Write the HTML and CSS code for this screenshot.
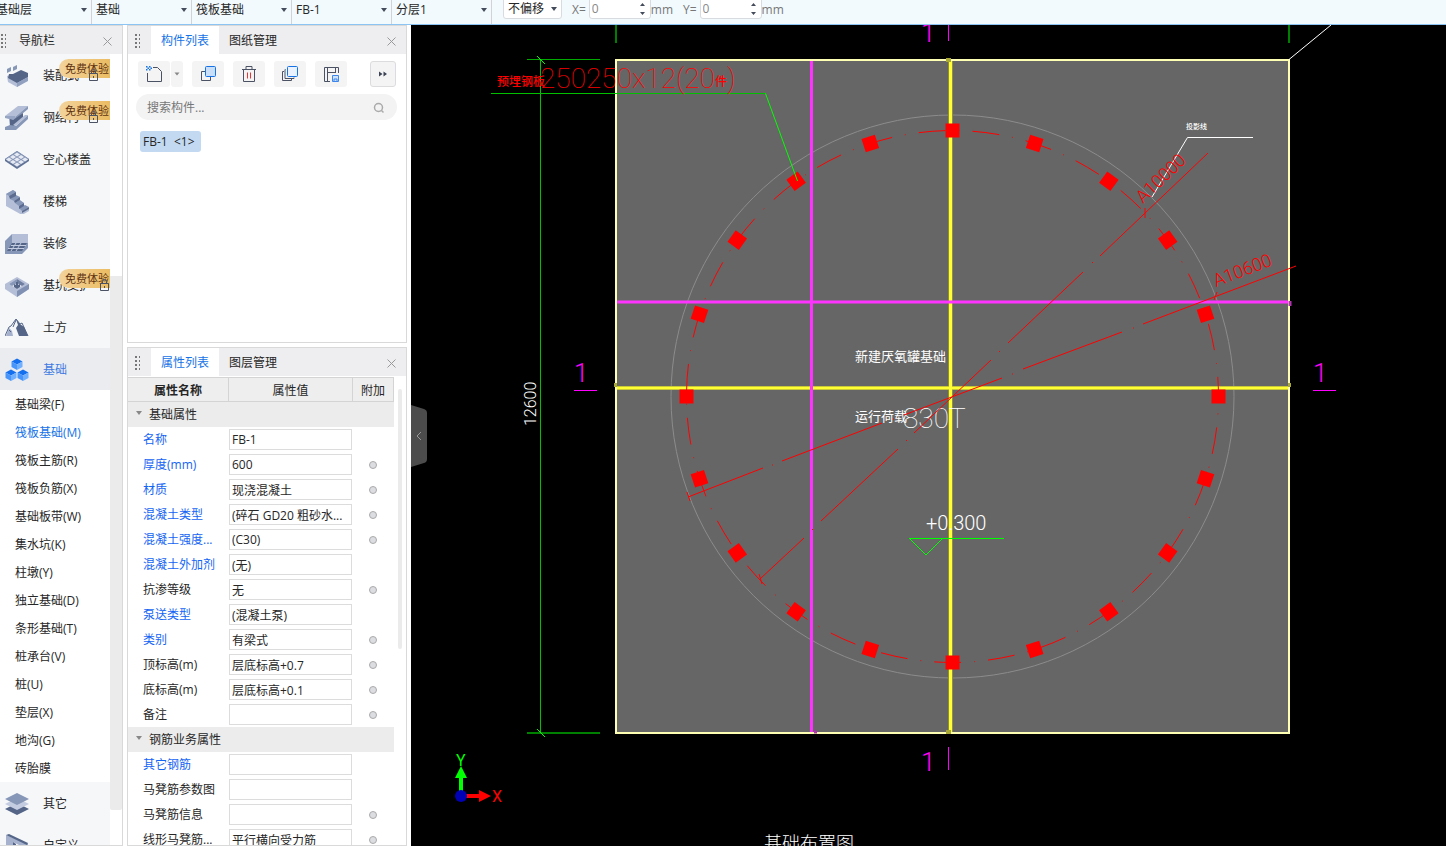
FILE: index.html
```
<!DOCTYPE html>
<html lang="zh-CN">
<head>
    <meta charset="UTF-8">
    <meta name="viewport" content="width=device-width, initial-scale=1.0">
    <title>筏板基础</title>
    <link rel="stylesheet" href="styles.css">
</head>
<body>

    <!-- Top bar -->
    <header class="topbar">
        <select class="combo" aria-label="楼层"><option>基础层</option></select>
        <select class="combo" aria-label="构件大类"><option>基础</option></select>
        <select class="combo" aria-label="构件类型"><option>筏板基础</option></select>
        <select class="combo" aria-label="构件"><option>FB-1</option></select>
        <select class="combo" aria-label="分层"><option>分层1</option></select>
        <select class="offset" aria-label="偏移方式"><option>不偏移</option></select>
        <label class="coord" for="dx">X=</label>
        <div class="spin">
            <input id="dx" type="text" value="0">
            <svg width="9" height="16" viewBox="0 0 9 16"><path d="M2 5L4.500 2L7 5ZM2 11L4.500 14L7 11Z" fill="#444b5a"/></svg>
        </div>
        <span class="unit">mm</span>
        <label class="coord" for="dy">Y=</label>
        <div class="spin">
            <input id="dy" type="text" value="0">
            <svg width="9" height="16" viewBox="0 0 9 16"><path d="M2 5L4.500 2L7 5ZM2 11L4.500 14L7 11Z" fill="#444b5a"/></svg>
        </div>
        <span class="unit">mm</span>
    </header>

    <main class="workspace">

        <!-- Navigation -->
        <nav class="nav">
            <div class="panel-head nav-head">
                <span class="grip"></span>
                <span class="nav-title">导航栏</span>
                <button class="close" aria-label="关闭"><svg width="9" height="9" viewBox="0 0 9 9"><path d="M.5.5l8 8M8.500.5l-8 8"/></svg></button>
            </div>
            <div class="nav-body">
                <div class="nav-list">
                    <a class="nav-item" href="#">
                        <svg class="nav-icon" viewBox="0 0 24 24"><path d="M2 5l4-2v4l-4 2zM8 3l4-2v4l-4 2z" fill="#8797b8"/><path d="M2 12l3-1 7 5 11-6v6l-11 7-9-5z" fill="#b4bed6"/><path d="M4 10l4 0 8-4 7 3v4l-11 6-9-5z" fill="#546588"/><path d="M12 19l11-6v4l-11 6z" fill="#93a1c1"/></svg>
                        <span>装配式</span><i class="badge">免费体验</i><svg class="lock" viewBox="0 0 9 12"><path d="M2.500 4V2.500a2 2 0 014 0V4M.5 4.500h8v7h-8zM4.500 7v2" /></svg>
                    </a>
                    <a class="nav-item" href="#">
                        <svg class="nav-icon" viewBox="0 0 24 24"><path d="M0 10L13 0h10L10 11z" fill="#b4bed6"/><path d="M10 11L23 0v3L11 13z" fill="#8797b8"/><path d="M0 10h10l1 3-3 1v6l-3 1-1-8-4-1z" fill="#97a5c5"/><path d="M5 13l3 1L18 7v5L8 21l-3-1z" fill="#546588"/><path d="M0 21l5-2 6 1L23 9v4L11 24H0z" fill="#8797b8"/><path d="M8 19L20 9h3L11 20z" fill="#b4bed6"/></svg>
                        <span>钢结构</span><i class="badge">免费体验</i><svg class="lock" viewBox="0 0 9 12"><path d="M2.500 4V2.500a2 2 0 014 0V4M.5 4.500h8v7h-8zM4.500 7v2" /></svg>
                    </a>
                    <a class="nav-item" href="#">
                        <svg class="nav-icon" viewBox="0 0 24 24"><path d="M0 11l12-8 12 8v2l-12 8-12-8z" fill="#5f7195"/><path d="M0 11l12-8 12 8-12 8z" fill="#8797b8"/><g fill="#e6eaf2"><path d="M12 4.500l3 2-3 2-3-2zM8 7l3 2-3 2-3-2zM16 7l3 2-3 2-3-2zM4 9.500l3 2-3 2-3-2zM12 9.500l3 2-3 2-3-2zM20 9.500l3 2-3 2-3-2zM8 12l3 2-3 2-3-2zM16 12l3 2-3 2-3-2zM12 14.500l3 2-3 2-3-2z"/></g></svg>
                        <span>空心楼盖</span>
                    </a>
                    <a class="nav-item" href="#">
                        <svg class="nav-icon" viewBox="0 0 24 24"><path d="M1 4l7-4 3 2v4l4 2v3l4 2v3l5 2v3l-7 4L1 16z" fill="#b4bed6"/><path d="M1 4l7-4 3 2-7 4zM5 9l6-4 4 2-6 4zM10 13l5-3 4 3-5 3zM14 18l6-3 4 2-7 4z" fill="#8797b8"/><path d="M4 6l7-4v4l-6 3zM9 11l6-4v3l-5 3zM14 16l5-3v3l-5 3zM17 21l7-4v2l-7 4z" fill="#5b6c90"/></svg>
                        <span>楼梯</span>
                    </a>
                    <a class="nav-item" href="#">
                        <svg class="nav-icon" viewBox="0 0 24 24"><path d="M0 9l7-7h16v14l-6 6H0z" fill="#8797b8"/><path d="M7 2h16v9H7z" fill="#b4bed6"/><path d="M7 11h15l-5 8H2z" fill="#546588"/><path d="M6 13.500h15M3 16.500h16M11 11l-5 8M16 11l-5 8" stroke="#c3cce0" stroke-width="1"/></svg>
                        <span>装修</span>
                    </a>
                    <a class="nav-item" href="#">
                        <svg class="nav-icon" viewBox="0 0 24 24"><path d="M0 10l12-7 12 7v5l-12 8-12-8z" fill="#b4bed6"/><path d="M12 17l12-7v5l-12 8z" fill="#7f90b3"/><path d="M4 10l8-5 8 5-8 5z" fill="#dfe4ee"/><path d="M4 10l8-5v4l-5 3z" fill="#8797b8"/><path d="M20 10l-8-5v4l5 3z" fill="#6d7d9f"/><path d="M9 10v3l3 2 3-2v-3l-2 1V8h-2v3z" fill="#546588"/></svg>
                        <span>基坑支护</span><i class="badge">免费体验</i><svg class="lock lock-far" viewBox="0 0 9 12"><path d="M2.500 4V2.500a2 2 0 014 0V4M.5 4.500h8v7h-8zM4.500 7v2" /></svg>
                    </a>
                    <a class="nav-item" href="#">
                        <svg class="nav-icon" viewBox="0 0 24 24"><path d="M11 3l2 6-2 3 3 8h9l-4-9-4-3z" fill="#546588"/><path d="M1 20l3-8 3 3 1 5z" fill="#a6b2cd"/><path d="M0 20l4-9 2-1 5-7 4 5 2-1 6 13M4 14l2 2M11 4l-3 7" fill="none" stroke="#546588" stroke-width="1"/></svg>
                        <span>土方</span>
                    </a>
                    <a class="nav-item active" href="#">
                        <svg class="nav-icon" viewBox="0 0 24 24"><g id="cube"><path d="M6.500 3.500l5.500-3 5.500 3-5.500 3z" fill="#1570f0"/><path d="M6.500 3.500l5.500 3v5.500l-5.500-3z" fill="#4795fb"/><path d="M17.500 3.500l-5.500 3v5.500l5.500-3z" fill="#70b0ff"/></g><use href="#cube" x="-6" y="11"/><use href="#cube" x="6" y="11"/></svg>
                        <span>基础</span>
                    </a>
                    <ul class="subnav">
                        <li><a href="#">基础梁(F)</a></li>
                        <li><a class="current" href="#">筏板基础(M)</a></li>
                        <li><a href="#">筏板主筋(R)</a></li>
                        <li><a href="#">筏板负筋(X)</a></li>
                        <li><a href="#">基础板带(W)</a></li>
                        <li><a href="#">集水坑(K)</a></li>
                        <li><a href="#">柱墩(Y)</a></li>
                        <li><a href="#">独立基础(D)</a></li>
                        <li><a href="#">条形基础(T)</a></li>
                        <li><a href="#">桩承台(V)</a></li>
                        <li><a href="#">桩(U)</a></li>
                        <li><a href="#">垫层(X)</a></li>
                        <li><a href="#">地沟(G)</a></li>
                        <li><a href="#">砖胎膜</a></li>
                    </ul>
                    <a class="nav-item" href="#">
                        <svg class="nav-icon" viewBox="0 0 24 24"><path d="M0 17l12-6 12 6-12 6z" fill="#546588"/><path d="M0 12l12-6 12 6-12 6z" fill="#c3cce0"/><path d="M0 7l12-6 12 6-12 6z" fill="#8797b8"/></svg>
                        <span>其它</span>
                    </a>
                    <a class="nav-item" href="#">
                        <svg class="nav-icon" viewBox="0 0 24 24"><path d="M1 1l22 9v6L8 23H1z" fill="#a6b2cd"/><path d="M1 1l3-1 19 9-1 2z" fill="#546588"/><path d="M8 8l10 5-10 5z" fill="#f5f7f9"/><path d="M8 8v12l3-2v-8z" fill="#546588"/></svg>
                        <span>自定义</span>
                    </a>
                </div>
                <div class="nav-scroll"></div>
            </div>
        </nav>

        <div class="panels">

            <!-- Component list -->
            <section class="panel">
                <div class="panel-head">
                    <span class="grip"></span>
                    <button class="tab active">构件列表</button>
                    <button class="tab">图纸管理</button>
                    <button class="close" aria-label="关闭"><svg width="9" height="9" viewBox="0 0 9 9"><path d="M.5.5l8 8M8.500.5l-8 8"/></svg></button>
                </div>
                <div class="tools">
                    <div class="split">
                        <button class="tool" aria-label="新建"><svg width="18" height="18" viewBox="0 0 18 18"><path d="M8 2.500h4.500l4 4v10h-14V8" /><path d="M1 1h1.500v1.500H1zM4 1h1.500v1.500H4zM2.500 2.500H4V4H2.500zM5.500 2.500H7V4H5.500zM1 4h1.500v1.500H1zM4 4h1.500v1.500H4z" fill="#1673e6" stroke="none"/></svg></button>
                        <button class="tool arrow" aria-label="更多新建"><svg width="6" height="4" viewBox="0 0 6 4"><path d="M.5.5h5L3 3.500z" fill="#888" stroke="none"/></svg></button>
                    </div>
                    <button class="tool" aria-label="复制"><svg width="18" height="18" viewBox="0 0 18 18"><path d="M6 6.500H2.500v9h9V12"/><rect x="6.500" y="1.500" width="10" height="10" rx="1" fill="#c9def8" stroke="#1673e6"/></svg></button>
                    <button class="tool" aria-label="删除"><svg width="18" height="18" viewBox="0 0 18 18"><path d="M2 4.500h14M6 4V1.500h6V4M3.500 5v11.500h11V5"/><path d="M7.500 7.500v6M10.500 7.500v6" stroke="#e33"/></svg></button>
                    <button class="tool" aria-label="层间复制"><svg width="18" height="18" viewBox="0 0 18 18"><path d="M3 6.500H1.500v9h9V14M4.500 4.500H4v9h9v-1"/><rect x="6.500" y="1.500" width="10" height="10" rx="1" fill="#e9f2fe" stroke="#1673e6"/></svg></button>
                    <button class="tool" aria-label="存档"><svg width="18" height="18" viewBox="0 0 18 18"><path d="M8 16.500H2.500v-14h14V8M5.500 3v13M13.500 3v5M5.500 7.500h8"/><path d="M10.500 10.500h6v6h-6zM12 16v-2h3v2" stroke="#3d86ec" fill="#cfe2fb"/></svg></button>
                    <button class="tool more" aria-label="更多"><svg width="8" height="6" viewBox="0 0 8 6"><path d="M0 .5v5L3.500 3zM4.500.5v5L8 3z" fill="#3c4354" stroke="none"/></svg></button>
                </div>
                <div class="search">
                    <input type="text" placeholder="搜索构件..." aria-label="搜索构件">
                    <svg width="12" height="12" viewBox="0 0 12 12"><circle cx="5.500" cy="5.500" r="4" fill="none" stroke="#aaa" stroke-width="1.500"/><path d="M8.500 8.500l2 2" stroke="#aaa" stroke-width="1.500"/></svg>
                </div>
                <button class="component">FB-1&nbsp; &lt;1&gt;</button>
            </section>

            <!-- Property list -->
            <section class="panel props">
                <div class="panel-head">
                    <span class="grip"></span>
                    <button class="tab active">属性列表</button>
                    <button class="tab">图层管理</button>
                    <button class="close" aria-label="关闭"><svg width="9" height="9" viewBox="0 0 9 9"><path d="M.5.5l8 8M8.500.5l-8 8"/></svg></button>
                </div>
                <div class="props-body">
                    <table>
                        <thead>
                            <tr><th class="strong">属性名称</th><th>属性值</th><th>附加</th></tr>
                        </thead>
                        <tbody>
                            <tr class="group"><td colspan="3">基础属性</td></tr>
                            <tr><td class="key"><label for="p1">名称</label></td><td><input id="p1" value="FB-1"></td><td></td></tr>
                            <tr><td class="key"><label for="p2">厚度(mm)</label></td><td><input id="p2" value="600"></td><td><i class="dot"></i></td></tr>
                            <tr><td class="key"><label for="p3">材质</label></td><td><input id="p3" value="现浇混凝土"></td><td><i class="dot"></i></td></tr>
                            <tr><td class="key"><label for="p4">混凝土类型</label></td><td><input id="p4" value="(碎石 GD20 粗砂水..."></td><td><i class="dot"></i></td></tr>
                            <tr><td class="key"><label for="p5">混凝土强度...</label></td><td><input id="p5" value="(C30)"></td><td><i class="dot"></i></td></tr>
                            <tr><td class="key"><label for="p6">混凝土外加剂</label></td><td><input id="p6" value="(无)"></td><td></td></tr>
                            <tr><td><label for="p7">抗渗等级</label></td><td><input id="p7" value="无"></td><td><i class="dot"></i></td></tr>
                            <tr><td class="key"><label for="p8">泵送类型</label></td><td><input id="p8" value="(混凝土泵)"></td><td></td></tr>
                            <tr><td class="key"><label for="p9">类别</label></td><td><input id="p9" value="有梁式"></td><td><i class="dot"></i></td></tr>
                            <tr><td><label for="p10">顶标高(m)</label></td><td><input id="p10" value="层底标高+0.7"></td><td><i class="dot"></i></td></tr>
                            <tr><td><label for="p11">底标高(m)</label></td><td><input id="p11" value="层底标高+0.1"></td><td><i class="dot"></i></td></tr>
                            <tr><td><label for="p12">备注</label></td><td><input id="p12" value=""></td><td><i class="dot"></i></td></tr>
                            <tr class="group"><td colspan="3">钢筋业务属性</td></tr>
                            <tr><td class="key"><label for="p13">其它钢筋</label></td><td><input id="p13" value=""></td><td></td></tr>
                            <tr><td><label for="p14">马凳筋参数图</label></td><td><input id="p14" value=""></td><td></td></tr>
                            <tr><td><label for="p15">马凳筋信息</label></td><td><input id="p15" value=""></td><td><i class="dot"></i></td></tr>
                            <tr><td><label for="p16">线形马凳筋...</label></td><td><input id="p16" value="平行横向受力筋"></td><td><i class="dot"></i></td></tr>
                        </tbody>
                    </table>
                    <div class="props-scroll"></div>
                </div>
            </section>
        </div>

        <!-- Drawing area -->
        <section class="canvas">
            <svg class="drawing">
                <defs>
                    <rect id="plate" x="-7" y="-273" width="14" height="14" fill="#f00"/>
                </defs>
                <g transform="translate(-411 -25)" fill="none">
                    <!-- raft slab -->
                    <rect x="616" y="60" width="673" height="673" fill="#666"/>
                    <circle cx="952.500" cy="396.500" r="281.500" stroke="#8c8c8c"/>

                    <!-- axes -->
                    <g stroke-width="3">
                        <path d="M615 388H1290" stroke="#8f8f3f" stroke-width="4"/>
                        <path d="M950.500 59V733" stroke="#8f8f3f" stroke-width="5"/>
                        <path d="M615 388H1290M950.500 59V733" stroke="#ff3"/>
                        <path d="M615 302H1290M811.500 59V733" stroke="#f3f"/>
                    </g>
                    <rect x="616" y="60" width="673" height="673" stroke="#ffffb4" stroke-width="2"/>
                    <path d="M614 385h3M1288 385h3M946 60h5M946 732h5" stroke="#a9a93a" stroke-width="4"/>
                    <path d="M814 732h3M1290 301v5" stroke="#b033b0" stroke-width="3"/>

                    <!-- bolt circle -->
                    <circle cx="952.500" cy="396.500" r="266" stroke="#f00" stroke-dasharray="27 13 1 13" stroke-dashoffset="23"/>
                    <g transform="translate(952.500 396.500)">
                        <use href="#plate"/>
                        <use href="#plate" transform="rotate(18)"/>
                        <use href="#plate" transform="rotate(36)"/>
                        <use href="#plate" transform="rotate(54)"/>
                        <use href="#plate" transform="rotate(72)"/>
                        <use href="#plate" transform="rotate(90)"/>
                        <use href="#plate" transform="rotate(108)"/>
                        <use href="#plate" transform="rotate(126)"/>
                        <use href="#plate" transform="rotate(144)"/>
                        <use href="#plate" transform="rotate(162)"/>
                        <use href="#plate" transform="rotate(180)"/>
                        <use href="#plate" transform="rotate(198)"/>
                        <use href="#plate" transform="rotate(216)"/>
                        <use href="#plate" transform="rotate(234)"/>
                        <use href="#plate" transform="rotate(252)"/>
                        <use href="#plate" transform="rotate(270)"/>
                        <use href="#plate" transform="rotate(288)"/>
                        <use href="#plate" transform="rotate(306)"/>
                        <use href="#plate" transform="rotate(324)"/>
                        <use href="#plate" transform="rotate(342)"/>
                    </g>

                    <!-- green dimension lines -->
                    <path d="M616 25v18M1289 25v18" stroke="#008000" stroke-width="2"/>
                    <path d="M527 59.500h73" stroke="#0a0"/>
                    <path d="M527 733h73" stroke="#008000" stroke-width="2"/>
                    <path d="M540.500 59V733M491 93.500H766" stroke="#00c000"/>
                    <path d="M537 56l8 8M537 729l8 8M765.500 93.500L797.500 181M909 538.500h95M910 539l16 16l16-16" stroke="#0f0"/>

                    <!-- leaders and section marks -->
                    <path d="M1289 59.500L1331 25M1152 197L1187.500 137.500H1253" stroke="#fff"/>
                    <path d="M948.500 25v16M948.500 747v23M574 390.500h23M1313 390.500h23" stroke="#f0f"/>

                    <!-- UCS icon -->
                    <path d="M461 796V778" stroke="#0f0" stroke-width="4"/>
                    <path d="M455 778L461 766L467 778z" fill="#0f0"/>
                    <path d="M461 796h19" stroke="#f00" stroke-width="4"/>
                    <path d="M479 790L491 796L479 802z" fill="#f00"/>
                    <circle cx="461" cy="796" r="6" fill="#0000b4"/>

                    <g class="cad">
                        <text class="red cad-cjk" x="497" y="86">预埋钢板<tspan class="cad-lg" x="540" y="88">250250x12(20</tspan><tspan y="86">件</tspan><tspan class="cad-lg" y="88">)</tspan></text>
                        <text class="red cad-md" transform="translate(1143 204) rotate(-44)">A10000</text>
                        <text class="red cad-md" transform="translate(1216 287) rotate(-21)">A10600</text>
                        <text class="cad-sm" transform="translate(536 426) rotate(-90)">12600</text>
                        <text class="cad-xs" x="1186" y="129">投影线</text>
                        <text class="cad-note" x="855" y="361">新建厌氧罐基础</text>
                        <text class="cad-note" x="855" y="421">运行荷载<tspan class="cad-xl" x="903" y="428">830T</tspan></text>
                        <text class="cad-lv" x="926" y="530">+0.300</text>
                        <text class="cad-title" x="764" y="850">基础布置图</text>
                        <g class="magenta">
                            <text x="921" y="42">1</text>
                            <text x="921" y="771">1</text>
                            <text x="574" y="382">1</text>
                            <text x="1313" y="382">1</text>
                        </g>
                        <text class="axis-y" x="456" y="766">Y</text>
                        <text class="axis-x" x="492" y="802">X</text>
                    </g>

                    <!-- diameter dimensions -->
                    <g stroke="#f00">
                        <path d="M1208 153L1100 256M1092 263l1-1M1083 272L1008 343M999 352l1-1M991 360L914 433M906 441l1-1M898 449L821 521M812 530l1-1M804 538L760 579"/>
                        <path d="M1296 266L1143 324M1133 328h1M1122 332L1023 369M1012 374h1M1002 378L904 415M893 419h1M882 423L782 461M772 465h1M763 468L688 497"/>
                        <path d="M759 574l3 10M1145 208v10M687 492l3 9M1217 292l-3 8"/>
                    </g>
                </g>
            </svg>
            <button class="collapse" aria-label="收起"><svg width="16" height="62" viewBox="0 0 16 62"><path d="M0 0L13 4Q16 5 16 8V54Q16 57 13 58L0 62z" fill="#4c4c4c"/><path d="M10 27l-4 4l4 4" fill="none" stroke="#999"/></svg></button>
        </section>
    </main>

</body>
</html>
```
FILE: styles.css
```
* {
    box-sizing: border-box;
}

body {
    margin: 0;
    height: 100vh;
    display: flex;
    flex-direction: column;
    overflow: hidden;
    background: #fff;
    color: #262626;
    font-family: "Open Sans", "Noto Sans CJK SC", sans-serif;
    font-size: 12px;
    line-height: 16px;
}

button, input, select {
    font: inherit;
    color: inherit;
    border: 0;
    margin: 0;
    padding: 0;
    background: none;
}

a {
    color: inherit;
    text-decoration: none;
}

/* Top bar */
.topbar {
    display: flex;
    align-items: flex-end;
    flex: none;
    height: 25px;
    padding-bottom: 5px;
    margin-left: -8px;
    overflow: hidden;
    background: #f2fafe;
    border-bottom: 1px solid #8cc4f4;
    white-space: nowrap;
}

.combo, .offset {
    appearance: none;
    height: 24px;
    padding: 3px 4px 0;
    background: url("data:image/svg+xml,%3Csvg xmlns='http://www.w3.org/2000/svg' width='6' height='4'%3E%3Cpath d='M0 0h6L3 4z' fill='%23444b5a'/%3E%3C/svg%3E") no-repeat;
}

.combo {
    width: 100px;
    height: 30px;
    margin-bottom: -5px;
    padding-top: 2px;
    border-right: 1px solid #d0d4d8;
    background-position: right 4px top 14px;
}

.offset {
    width: 59px;
    margin-left: 11px;
    border: 1px solid #d8dce0;
    border-radius: 3px;
    background-color: #fff;
    background-position: right 4px top 11px;
}

.coord {
    margin-left: 10px;
    padding: 0 3px 1px 0;
    color: #777;
}

.spin {
    display: flex;
    align-items: center;
    width: 62px;
    height: 24px;
    padding-top: 4px;
    border: 1px solid #d8dce0;
    border-radius: 3px;
    background: #fff;
}

.spin input {
    width: 48px;
    padding-left: 2px;
    color: #888;
}

.unit {
    padding-bottom: 1px;
    color: #777;
}

/* Layout */
.workspace {
    flex: 1;
    display: flex;
    min-height: 0;
}

.nav {
    display: flex;
    flex-direction: column;
    flex: none;
    width: 123px;
    border: solid #d9d9d9;
    border-width: 1px 1px 1px 0;
}

.panels {
    display: flex;
    flex-direction: column;
    gap: 4px;
    flex: none;
    width: 288px;
    padding: 0 4px;
}

.canvas {
    position: relative;
    flex: 1;
    min-width: 0;
    overflow: hidden;
    background: #000;
}

/* Panel header */
.panel-head {
    display: flex;
    align-items: center;
    flex: none;
    height: 28px;
    background: #eeeef0;
}

.grip {
    width: 6px;
    height: 15px;
    margin: 0 11px 0 6px;
    background: radial-gradient(circle, #777 1px, transparent 1px) 0 0 / 4px 4px;
}

.tab {
    height: 28px;
    padding: 2px 10px 0;
}

.tab.active {
    background: #fff;
    color: #1673e6;
}

.close {
    margin-left: auto;
    padding: 3px 10px 1px;
    line-height: 0;
}

.close path {
    stroke: #999;
}

/* Navigation */
.nav-head .grip {
    margin: 0 13px 0 0;
}

.nav-title {
    padding-top: 2px;
}

.nav-body {
    display: flex;
    flex: 1;
    min-height: 0;
    overflow: hidden;
}

.nav-list {
    width: 110px;
    overflow: hidden;
}

.nav-item {
    position: relative;
    display: flex;
    align-items: center;
    gap: 14px;
    height: 42px;
    padding: 2px 0 0 5px;
    background: #f5f7f9;
    white-space: nowrap;
}

.nav-item.active {
    background: #ebecf0;
    color: #3f7be0;
}

.nav-icon {
    width: 24px;
    height: 24px;
}

.badge {
    position: absolute;
    top: 5px;
    right: 0;
    width: 51px;
    height: 19px;
    padding-left: 6px;
    overflow: hidden;
    border-radius: 10px 0 0 10px;
    background: linear-gradient(90deg, #f3d39c, #ebbc62);
    color: #5f3210;
    font-size: 11px;
    font-style: normal;
    line-height: 20px;
}

.lock {
    position: absolute;
    top: 15px;
    right: 12px;
    width: 9px;
    height: 12px;
}

.lock-far {
    right: 1px;
}

.lock path {
    fill: none;
    stroke: #4a5263;
}

.subnav {
    margin: 0;
    padding: 0;
    list-style: none;
}

.subnav a {
    display: block;
    padding: 2px 0 0 15px;
    line-height: 26px;
}

.subnav .current {
    color: #1673e6;
}

.nav-scroll {
    flex: 1;
    margin: 222px 0 35px;
    border-radius: 0 0 2px 2px;
    background: #ebebeb;
}

/* Component list */
.panel {
    flex: none;
    height: 318px;
    border: 1px solid #d9d9d9;
}

.tools {
    display: flex;
    gap: 9px;
    padding: 7px 10px 0;
}

.split {
    display: flex;
    gap: 1px;
}

.tool {
    display: flex;
    align-items: center;
    justify-content: center;
    width: 32px;
    height: 26px;
    border-radius: 3px;
    background: #f4f4f5;
}

.tool svg {
    fill: none;
    stroke: #4a5263;
}

.split .arrow {
    width: 12px;
}

.tool.more {
    width: 26px;
    margin-left: auto;
    border: 1px solid #dcdcde;
}

.search {
    display: flex;
    align-items: center;
    justify-content: space-between;
    height: 26px;
    margin: 7px 9px 11px 8px;
    padding: 2px 12px 0 11px;
    border-radius: 13px;
    background: #f3f3f3;
}

.search input::placeholder {
    color: #777;
}

.component {
    margin-left: 12px;
    padding: 0 6px 0 3px;
    height: 21px;
    border-radius: 3px;
    background: #c2d9f1;
}

/* Property list */
.props {
    flex: 1;
    display: flex;
    flex-direction: column;
    min-height: 0;
    overflow: hidden;
}

.props-body {
    display: flex;
    flex: 1;
    min-height: 0;
    padding-top: 1px;
    overflow: hidden;
}

table {
    flex: none;
    align-self: flex-start;
    width: 266px;
    border-collapse: separate;
    border-spacing: 0;
    table-layout: fixed;
}

th {
    height: 25px;
    padding: 2px 0 0;
    border: solid #d4d4d4;
    border-width: 1px 1px 1px 0;
    background: #eee;
    font-weight: normal;
}

th:first-child {
    width: 101px;
}

th:last-child {
    width: 41px;
}

.strong {
    font-weight: bold;
}

td {
    height: 25px;
    padding: 0;
    white-space: nowrap;
}

td:first-child {
    padding-left: 15px;
}

td:last-child {
    padding-right: 2px;
    text-align: center;
}

.key {
    color: #1464f4;
}

.group td:first-child {
    padding-left: 21px;
    background: #ececec url("data:image/svg+xml,%3Csvg xmlns='http://www.w3.org/2000/svg' width='6' height='4'%3E%3Cpath d='M0 0h6L3 4z' fill='%23888'/%3E%3C/svg%3E") no-repeat 8px 9px;
    text-align: left;
}

td input {
    display: block;
    width: 123px;
    height: 21px;
    padding: 0 2px;
    border: 1px solid #dcdcdc;
    background: #fff;
}

.dot {
    display: inline-block;
    width: 8px;
    height: 8px;
    border: 1px solid #aaa;
    border-radius: 50%;
    background: #dcdde0;
    vertical-align: middle;
}

.props-scroll {
    width: 4px;
    height: 260px;
    margin: 12px 0 0 4px;
    border-radius: 2px;
    background: #ebebeb;
}

/* Drawing */
.drawing {
    display: block;
    width: 100%;
    height: 100%;
}

.cad {
    fill: #fff;
    font-family: Roboto, "Noto Sans CJK SC", sans-serif;
    font-weight: 300;
}

.cad .red {
    fill: #f00;
}

.magenta {
    fill: #f0f;
    font-size: 26px;
}

.cad-xs {
    font-size: 7px;
    font-weight: 500;
}

.cad-cjk {
    font-size: 12px;
    font-weight: 500;
}

.cad-note {
    font-size: 13px;
    font-weight: 400;
}

.cad-sm {
    font-size: 16px;
}

.cad-title {
    font-size: 18px;
}

.cad-md {
    font-size: 18px;
}

.cad-lv {
    font-size: 20px;
}

.cad-lg {
    font-size: 28px;
    font-weight: 100;
}

.cad-xl {
    font-size: 28px;
    font-weight: 100;
}

.axis-x, .axis-y {
    font-size: 16px;
    font-weight: 400;
}

.axis-x {
    fill: #f00;
}

.axis-y {
    fill: #0f0;
}

.collapse {
    position: absolute;
    left: 0;
    top: 380px;
    line-height: 0;
}
```
